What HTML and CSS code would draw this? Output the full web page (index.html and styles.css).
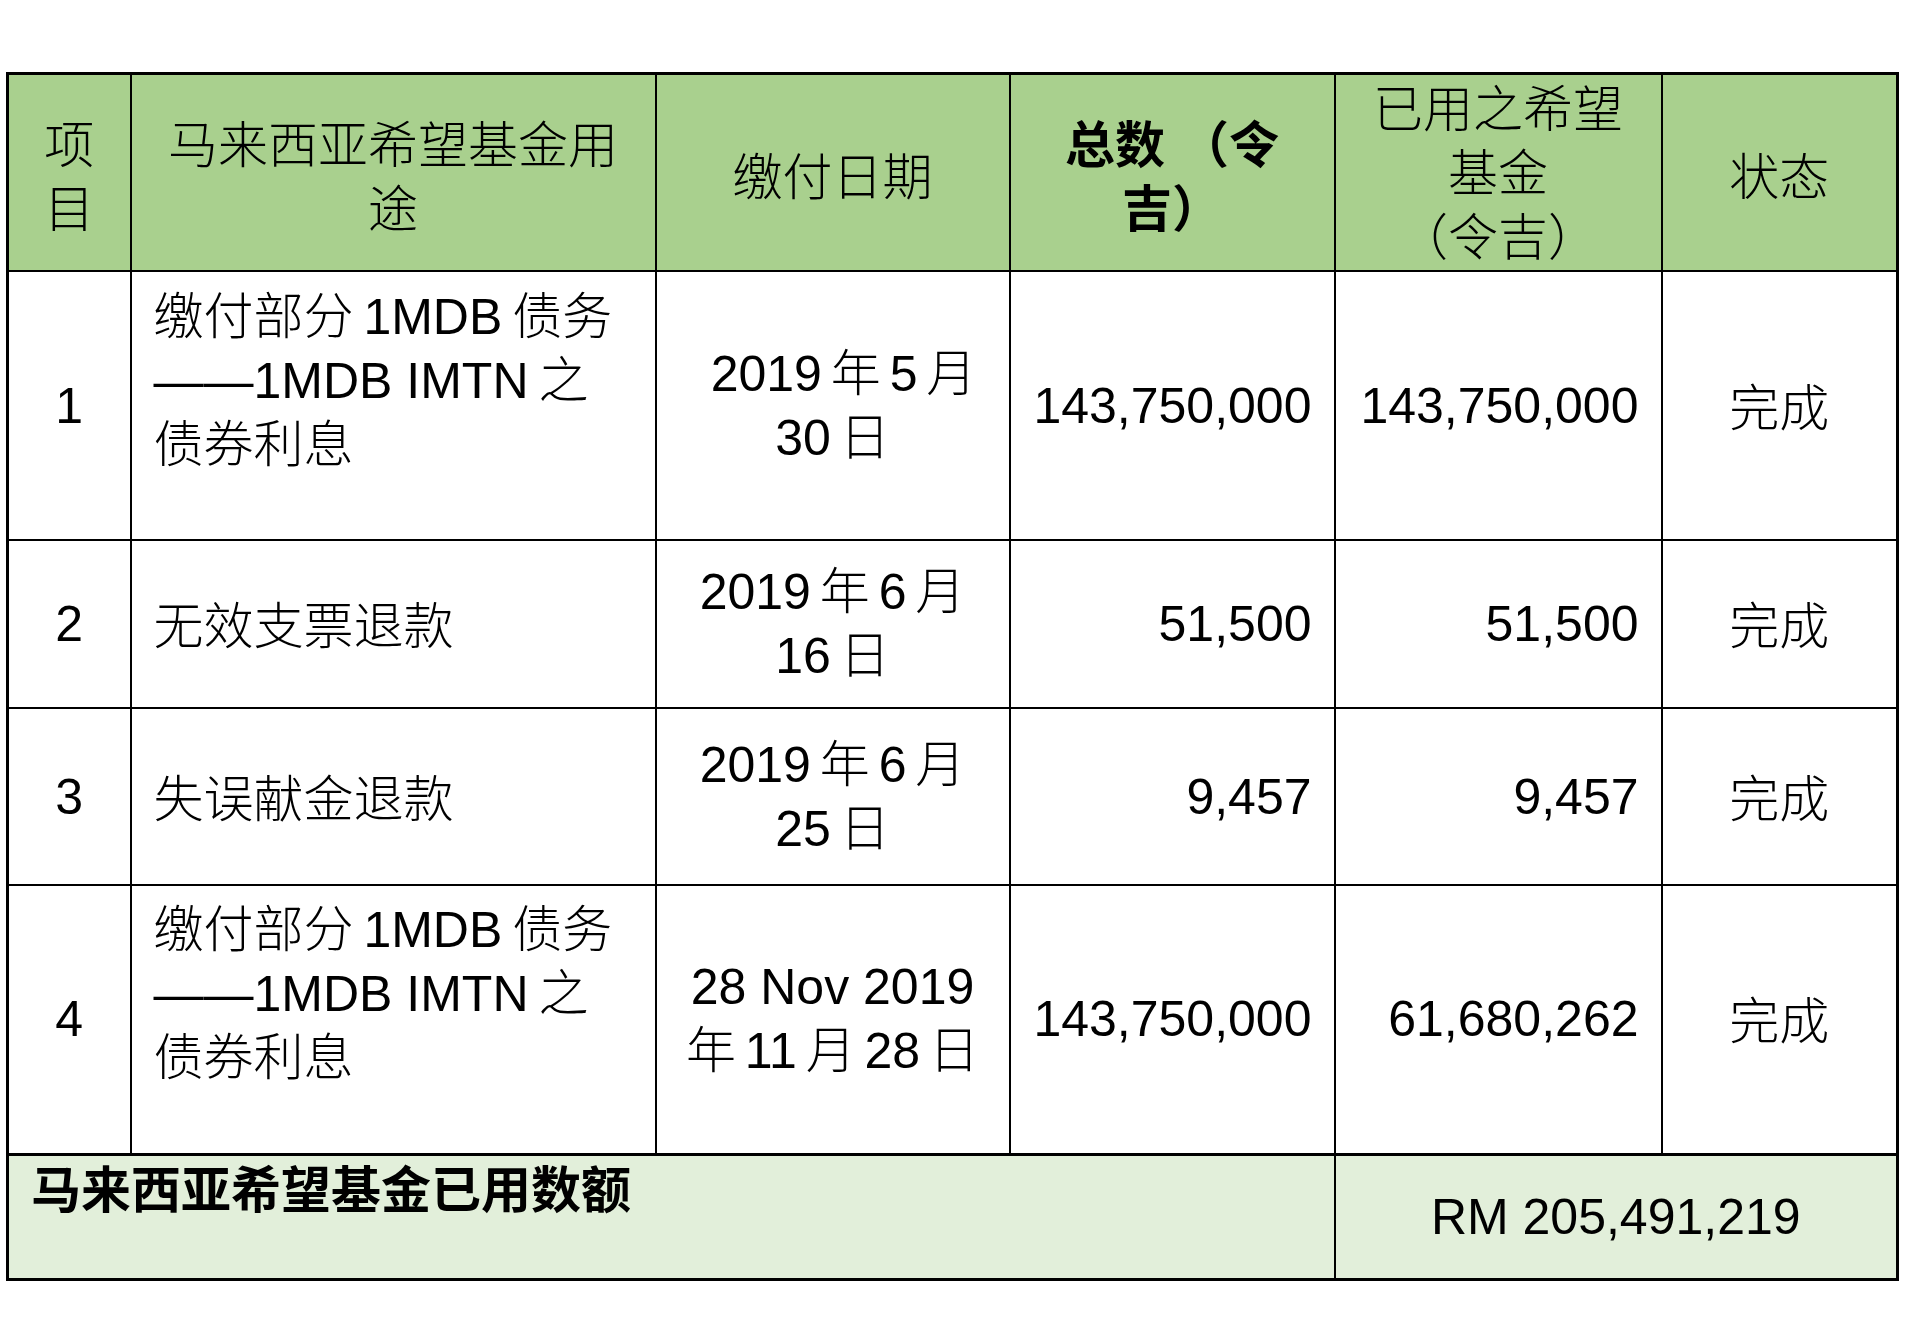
FILE: index.html
```html
<!DOCTYPE html>
<html lang="zh-CN">
<head>
<meta charset="utf-8">
<title>马来西亚希望基金用途</title>
<link rel="stylesheet" href="styles.css">
</head>
<body>
<div class="page">
<table class="fund">
  <colgroup>
    <col class="c-item">
    <col class="c-desc">
    <col class="c-date">
    <col class="c-total">
    <col class="c-used">
    <col class="c-status">
  </colgroup>
  <thead>
    <tr class="r-head">
      <th>项<br>目</th>
      <th>马来西亚希望基金用<br>途</th>
      <th>缴付日期</th>
      <th class="bold">总数 （令<br>吉）</th>
      <th class="tri">已用之希望<br>基金<br>（令吉）</th>
      <th>状态</th>
    </tr>
  </thead>
  <tbody>
    <tr class="r-tall">
      <td class="center">1</td>
      <td class="desc multi">缴付部分 1MDB 债务<br>——1MDB<span class="latin"> </span>IMTN 之<br>债券利息</td>
      <td class="date"><span class="lead">2019 年 5 月</span><br>30 日</td>
      <td class="num">143,750,000</td>
      <td class="num">143,750,000</td>
      <td class="status">完成</td>
    </tr>
    <tr class="r-2">
      <td class="center">2</td>
      <td class="desc">无效支票退款</td>
      <td class="date">2019 年 6 月<br>16 日</td>
      <td class="num">51,500</td>
      <td class="num">51,500</td>
      <td class="status">完成</td>
    </tr>
    <tr class="r-3">
      <td class="center">3</td>
      <td class="desc">失误献金退款</td>
      <td class="date">2019 年 6 月<br>25 日</td>
      <td class="num">9,457</td>
      <td class="num">9,457</td>
      <td class="status">完成</td>
    </tr>
    <tr class="r-tall">
      <td class="center">4</td>
      <td class="desc multi">缴付部分 1MDB 债务<br>——1MDB<span class="latin"> </span>IMTN 之<br>债券利息</td>
      <td class="date"><span class="latin">28 Nov 2019</span><br>年 11 月 28 日</td>
      <td class="num">143,750,000</td>
      <td class="num">61,680,262</td>
      <td class="status">完成</td>
    </tr>
  </tbody>
  <tfoot>
    <tr class="r-foot">
      <td colspan="4" class="foot-label">马来西亚希望基金已用数额</td>
      <td colspan="2" class="foot-total">RM 205,491,219</td>
    </tr>
  </tfoot>
</table>
</div>
</body>
</html>
```

FILE: styles.css
```css
html, body {
  margin: 0;
  padding: 0;
  background: #ffffff;
}

.page {
  padding: 72px 0 0 6px;
}

.fund {
  border-collapse: collapse;
  table-layout: fixed;
  width: 1890px;
  border: 3px solid #000;
  font-family: "Liberation Sans", "Noto Sans CJK SC", sans-serif;
  font-size: 50px;
  line-height: 64px;
  color: #000;
  text-spacing-trim: space-all;
}

.c-item { width: 123px; }
.c-desc { width: 525px; }
.c-date { width: 354px; }
.c-total { width: 325px; }
.c-used { width: 327px; }
.c-status { width: 236px; }

.fund th,
.fund td {
  border: 2px solid #000;
  padding: 0 22px;
  vertical-align: middle;
}

.fund th {
  background: #a9d08e;
  font-weight: 300;
  text-align: center;
  line-height: 64px;
  padding-top: 10px;
  padding-bottom: 0;
}

.fund th.tri {
  padding-top: 3px;
  padding-left: 12px;
  padding-right: 12px;
}

.fund th.bold {
  font-weight: 700;
}

.fund td {
  font-weight: 300;
}

.r-head { height: 197px; }
.r-tall { height: 269px; }
.r-2 { height: 168px; }
.r-3 { height: 177px; }
.r-foot { height: 125px; }

.fund .center { text-align: center; }

.fund .status {
  text-align: center;
  padding-top: 6px;
}

.fund .date {
  text-align: center;
  white-space: nowrap;
  word-spacing: -5px;
  padding: 0 8px;
}

.fund .lead {
  padding-left: 22px;
}

.fund .latin {
  word-spacing: 0;
}

.fund .num { text-align: right; }

.fund .desc {
  text-align: left;
  word-spacing: -4px;
  padding-top: 6px;
}

.fund .desc.multi {
  padding-top: 0;
  padding-bottom: 50px;
}

.fund .r-foot td {
  background: #e2efda;
  border-top: 3px solid #000;
}

.fund .foot-label {
  font-weight: 700;
  vertical-align: top;
  padding-top: 3px;
  padding-left: 22px;
  text-align: left;
}

.fund .foot-total {
  text-align: center;
  padding-top: 0;
}
```
